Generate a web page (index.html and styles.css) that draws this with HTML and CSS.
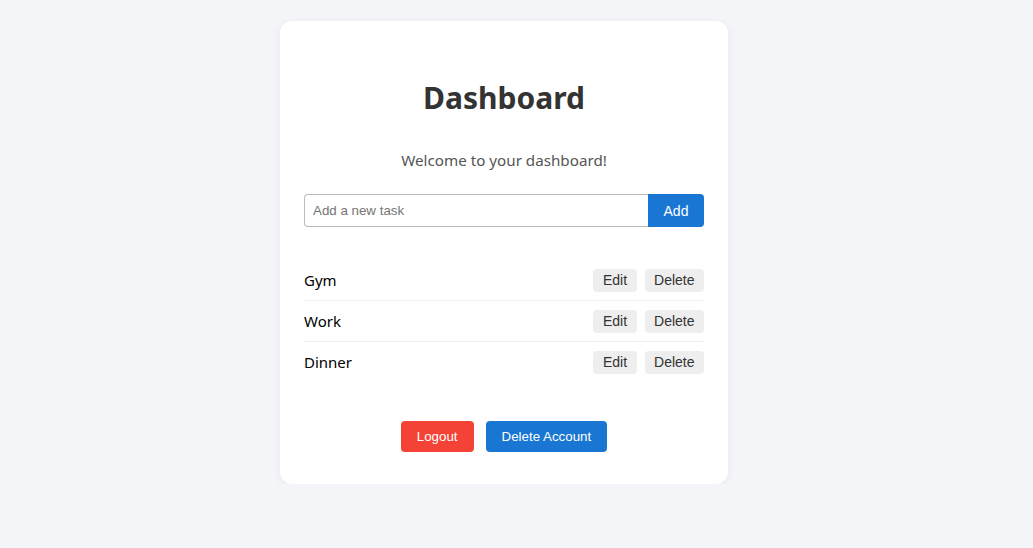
FILE: index.html
```html
<!DOCTYPE html>
<html lang="en">
<head>
<meta charset="utf-8">
<title>Dashboard</title>
<link rel="stylesheet" href="styles.css">
</head>
<body>
<div class="page">
  <main class="card">
    <h1 class="title">Dashboard</h1>
    <p class="welcome">Welcome to your dashboard!</p>
    <form class="task-form">
      <input class="task-input" type="text" placeholder="Add a new task">
      <button class="add-btn" type="button">Add</button>
    </form>
    <ul class="task-list">
      <li class="task"><span class="task-name">Gym</span><span class="task-actions"><button class="small-btn" type="button">Edit</button><button class="small-btn" type="button">Delete</button></span></li>
      <li class="task"><span class="task-name">Work</span><span class="task-actions"><button class="small-btn" type="button">Edit</button><button class="small-btn" type="button">Delete</button></span></li>
      <li class="task"><span class="task-name">Dinner</span><span class="task-actions"><button class="small-btn" type="button">Edit</button><button class="small-btn" type="button">Delete</button></span></li>
    </ul>
    <div class="footer-actions">
      <button class="btn btn-red" type="button">Logout</button>
      <button class="btn btn-blue" type="button">Delete Account</button>
    </div>
  </main>
</div>
</body>
</html>
```

FILE: styles.css
```css
html, body {
  margin: 0;
  padding: 0;
  background: #f4f5f9;
  font-family: "Noto Sans", "Open Sans", sans-serif;
}
.page {
  display: flex;
  justify-content: center;
  padding: 21px 25px 0 0;
}
.card {
  box-sizing: border-box;
  width: 448px;
  background: #fff;
  border-radius: 12px;
  padding: 24px 24px 32px;
  box-shadow: 0 2px 8px rgba(0,0,0,0.06);
}
.title {
  margin: 35px 0 0;
  text-align: center;
  font-size: 30px;
  font-weight: 700;
  color: #333;
  line-height: 36px;
}
.welcome {
  margin: 33px 0 0;
  text-align: center;
  font-size: 15.2px;
  line-height: 22px;
  color: #555;
}
.task-form {
  display: flex;
  margin: 23px 0 0;
}
.task-input {
  flex: 1;
  height: 33px;
  box-sizing: border-box;
  border: 1px solid #bbb;
  border-right: none;
  border-radius: 4px 0 0 4px;
  padding: 0 8px;
  font-family: "Liberation Sans", Arial, sans-serif;
  font-size: 13.33px;
  color: #333;
}
.task-input::placeholder { color: #757575; }
.add-btn {
  width: 56px;
  height: 33px;
  border: none;
  border-radius: 0 4px 4px 0;
  background: #1976d2;
  color: #fff;
  font-family: "Liberation Sans", Arial, sans-serif;
  font-size: 14px;
}
.task-list {
  list-style: none;
  margin: 33px 0 0;
  padding: 0;
}
.task {
  display: flex;
  align-items: center;
  justify-content: space-between;
  padding: 8px 0;
  border-bottom: 1px solid #eee;
}
.task:last-child { border-bottom: none; }
.task-name {
  font-size: 15px;
  line-height: 24px;
  color: #000;
}
.task-actions {
  display: flex;
  gap: 8px;
}
.small-btn {
  height: 23px;
  padding: 0 9.5px;
  border: none;
  border-radius: 4px;
  background: #eee;
  color: #333;
  font-family: "Liberation Sans", Arial, sans-serif;
  font-size: 14px;
}
.footer-actions {
  display: flex;
  justify-content: center;
  gap: 12px;
  margin-top: 39px;
}
.btn {
  height: 31px;
  padding: 0 16px;
  border: none;
  border-radius: 4px;
  color: #fff;
  font-family: "Liberation Sans", Arial, sans-serif;
  font-size: 13.33px;
}
.btn-red { background: #f44336; }
.btn-blue { background: #1976d2; }
```
